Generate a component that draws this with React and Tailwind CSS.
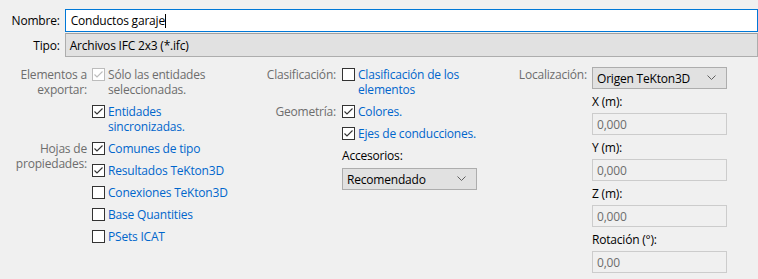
function Check({ checked, disabled }) {
  const color = disabled ? "#bcbcbc" : "#333333";
  return (
    <svg width="13" height="13" viewBox="0 0 13 13" className="mt-[1px] shrink-0">
      <rect x="0.5" y="0.5" width="12" height="12" fill="#ffffff" stroke={color} />
      {checked && (
        <polyline points="2.5,6.5 5,9 10.5,3.5" fill="none" stroke={color} strokeWidth="1.1" />
      )}
    </svg>
  );
}

function Item({ checked, disabled, children }) {
  return (
    <div className="flex items-start gap-[3px]">
      <Check checked={checked} disabled={disabled} />
      <span className={disabled ? "text-[#6d6d6d]" : "text-[#0066cc]"}>{children}</span>
    </div>
  );
}

function Chevron() {
  return (
    <svg width="9" height="6" viewBox="0 0 9 6" className="shrink-0">
      <polyline points="0.5,0.5 4.5,4.5 8.5,0.5" fill="none" stroke="#606060" strokeWidth="1" />
    </svg>
  );
}

function Select({ value, className }) {
  return (
    <div
      className={`flex items-center justify-between h-[22px] border border-[#adadad] bg-[#e1e1e1] pl-[4px] pr-[10px] text-black ${className}`}
    >
      <span>{value}</span>
      <Chevron />
    </div>
  );
}

function Field({ label, value }) {
  return (
    <div className="mt-[5px]">
      <div className="text-black leading-[15px]">{label}</div>
      <div className="mt-[4px] h-[22px] border border-[#cccccc] bg-[#f0f0f0] pl-[4px] flex items-center text-[#6d6d6d]">
        {value}
      </div>
    </div>
  );
}

export default function App() {
  return (
    <div
      className="w-[758px] h-[279px] overflow-hidden bg-[#f0f0f0] text-[12px] leading-[15px] tracking-[-0.2px]"
      style={{ fontFamily: '"Open Sans", "Noto Sans", sans-serif' }}
    >
      <div className="pt-[9px]">
        <div className="flex items-center gap-[5px]">
          <div className="w-[62px] text-right text-black">Nombre:</div>
          <div className="w-[720px] h-[23px] border border-[#0078d7] bg-white flex items-center pl-[5px] text-black">
            <span>Conductos garaje</span>
            <span className="w-px h-[14px] bg-black"></span>
          </div>
        </div>
        <div className="flex items-center gap-[5px] mt-[1px]">
          <div className="w-[62px] text-right text-black">Tipo:</div>
          <div className="w-[720px] h-[24px] border border-[#adadad] border-t-[#a0a0a0] bg-[#e1e1e1] flex items-center pl-[4px] text-black">
            Archivos IFC 2x3 (*.ifc)
          </div>
        </div>
      </div>

      <div className="flex mt-[10px]">
        <div className="w-[260px] grid grid-cols-[87px_1fr] gap-x-[5px] gap-y-[7px] content-start">
          <div className="text-right text-[#6d6d6d]">
            Elementos a<br />exportar:
          </div>
          <div className="flex flex-col gap-[7px]">
            <Item checked disabled>
              Sólo las entidades<br />seleccionadas.
            </Item>
            <Item checked>
              Entidades<br />sincronizadas.
            </Item>
          </div>
          <div className="text-right text-[#6d6d6d]">
            Hojas de<br />propiedades:
          </div>
          <div className="flex flex-col gap-[7px]">
            <Item checked>Comunes de tipo</Item>
            <Item checked>Resultados TeKton3D</Item>
            <Item>Conexiones TeKton3D</Item>
            <Item>Base Quantities</Item>
            <Item>PSets ICAT</Item>
          </div>
        </div>

        <div className="w-[240px] grid grid-cols-[76px_1fr] gap-x-[6px] gap-y-[7px] content-start">
          <div className="text-right text-[#6d6d6d]">Clasificación:</div>
          <Item>
            Clasificación de los<br />elementos
          </Item>
          <div className="text-right text-[#6d6d6d]">Geometría:</div>
          <div className="flex flex-col gap-[7px]">
            <Item checked>Colores.</Item>
            <Item checked>Ejes de conducciones.</Item>
          </div>
          <div className="col-start-2">
            <div className="text-black">Accesorios:</div>
            <Select value="Recomendado" className="mt-[5px] w-[135px]" />
          </div>
        </div>

        <div className="grid grid-cols-[87px_135px] gap-x-[5px] content-start">
          <div className="text-right text-[#6d6d6d]">Localización:</div>
          <div>
            <Select value="Origen TeKton3D" />
            <Field label="X (m):" value="0,000" />
            <Field label="Y (m):" value="0,000" />
            <Field label="Z (m):" value="0,000" />
            <Field label="Rotación (°):" value="0,00" />
          </div>
        </div>
      </div>
    </div>
  );
}
